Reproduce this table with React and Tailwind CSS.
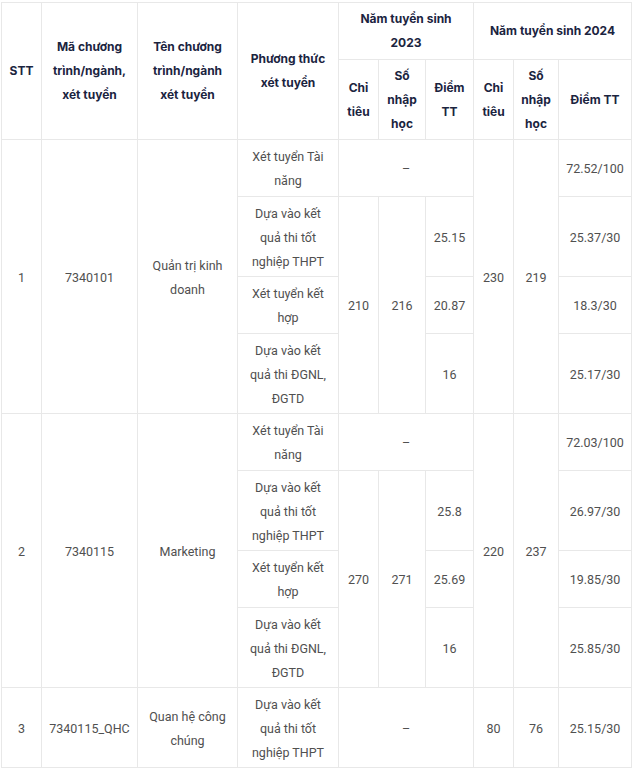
import React from "react";

const H = ({ children, className = "", ...rest }) => (
  <th
    {...rest}
    className={
      "border border-[#e8e8e8] px-1 py-[3px] text-center align-middle font-bold text-[12px] text-[#1b2440] font-['Inter',sans-serif] " +
      className
    }
  >
    {children}
  </th>
);

const D = ({ children, className = "", ...rest }) => (
  <td
    {...rest}
    className={
      "border border-[#e8e8e8] px-1 pt-[4px] pb-[2px] text-center align-middle font-normal text-[12.5px] text-[#505050] font-['Roboto',sans-serif] " +
      className
    }
  >
    {children}
  </td>
);

function Block({ stt, code, name, c23, n23, scores23, c24, n24, scores24 }) {
  return (
    <>
      <tr className="h-[57px]">
        <D rowSpan={4}>{stt}</D>
        <D rowSpan={4}>{code}</D>
        <D rowSpan={4}>{name}</D>
        <D>
          Xét tuyển Tài
          <br />
          năng
        </D>
        <D colSpan={3}>–</D>
        <D rowSpan={4}>{c24}</D>
        <D rowSpan={4}>{n24}</D>
        <D>{scores24[0]}</D>
      </tr>
      <tr className="h-[80px]">
        <D>
          Dựa vào kết
          <br />
          quả thi tốt
          <br />
          nghiệp THPT
        </D>
        <D rowSpan={3}>{c23}</D>
        <D rowSpan={3}>{n23}</D>
        <D>{scores23[0]}</D>
        <D>{scores24[1]}</D>
      </tr>
      <tr className="h-[57px]">
        <D>
          Xét tuyển kết
          <br />
          hợp
        </D>
        <D>{scores23[1]}</D>
        <D>{scores24[2]}</D>
      </tr>
      <tr className="h-[80px]">
        <D>
          Dựa vào kết
          <br />
          quả thi ĐGNL,
          <br />
          ĐGTD
        </D>
        <D>{scores23[2]}</D>
        <D>{scores24[3]}</D>
      </tr>
    </>
  );
}

export default function App() {
  return (
    <div className="bg-white w-[635px] h-[769px] overflow-hidden pt-[2px] pl-[1px]">
      <table className="table-fixed border-collapse w-[630px] leading-[24px]">
        <colgroup>
          <col className="w-[40px]" />
          <col className="w-[96px]" />
          <col className="w-[100px]" />
          <col className="w-[101px]" />
          <col className="w-[40px]" />
          <col className="w-[47px]" />
          <col className="w-[48px]" />
          <col className="w-[40px]" />
          <col className="w-[45px]" />
          <col className="w-[73px]" />
        </colgroup>
        <thead>
          <tr className="h-[57px]">
            <H rowSpan={2}>STT</H>
            <H rowSpan={2}>
              Mã chương
              <br />
              trình/ngành,
              <br />
              xét tuyển
            </H>
            <H rowSpan={2}>
              Tên chương
              <br />
              trình/ngành
              <br />
              xét tuyển
            </H>
            <H rowSpan={2}>
              Phương thức
              <br />
              xét tuyển
            </H>
            <H colSpan={3}>
              Năm tuyển sinh
              <br />
              2023
            </H>
            <H colSpan={3}>Năm tuyển sinh 2024</H>
          </tr>
          <tr className="h-[80px]">
            <H>
              Chỉ
              <br />
              tiêu
            </H>
            <H>
              Số
              <br />
              nhập
              <br />
              học
            </H>
            <H>
              Điểm
              <br />
              TT
            </H>
            <H>
              Chỉ
              <br />
              tiêu
            </H>
            <H>
              Số
              <br />
              nhập
              <br />
              học
            </H>
            <H>Điểm TT</H>
          </tr>
        </thead>
        <tbody>
          <Block
            stt="1"
            code="7340101"
            name={
              <>
                Quản trị kinh
                <br />
                doanh
              </>
            }
            c23="210"
            n23="216"
            scores23={["25.15", "20.87", "16"]}
            c24="230"
            n24="219"
            scores24={["72.52/100", "25.37/30", "18.3/30", "25.17/30"]}
          />
          <Block
            stt="2"
            code="7340115"
            name="Marketing"
            c23="270"
            n23="271"
            scores23={["25.8", "25.69", "16"]}
            c24="220"
            n24="237"
            scores24={["72.03/100", "26.97/30", "19.85/30", "25.85/30"]}
          />
          <tr className="h-[80px]">
            <D>3</D>
            <D>7340115_QHC</D>
            <D>
              Quan hệ công
              <br />
              chúng
            </D>
            <D>
              Dựa vào kết
              <br />
              quả thi tốt
              <br />
              nghiệp THPT
            </D>
            <D colSpan={3}>–</D>
            <D>80</D>
            <D>76</D>
            <D>25.15/30</D>
          </tr>
        </tbody>
      </table>
    </div>
  );
}
